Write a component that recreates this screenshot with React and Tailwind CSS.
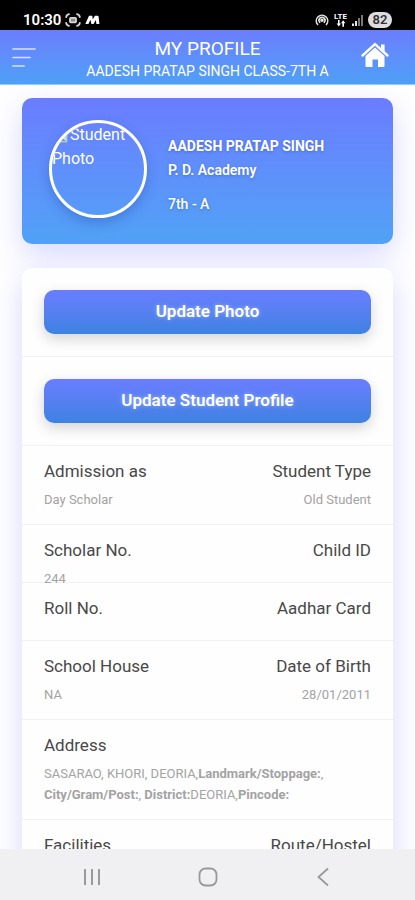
import React from 'react';

const rows = [
  { left: ['Admission as', 'Day Scholar'], right: ['Student Type', 'Old Student'] },
  { left: ['Scholar No.', '244'], right: ['Child ID', ''], compact: true },
  { left: ['Roll No.', ''], right: ['Aadhar Card', ''], compact: true },
  { left: ['School House', 'NA'], right: ['Date of Birth', '28/01/2011'] },
];

const StatusBar = () => (
  <div className="h-[30px] shrink-0 bg-black text-white flex items-center justify-between pt-[10px] px-[23px]">
    <div className="flex items-center gap-1">
      <span className="text-[15px] leading-5 font-semibold">10:30</span>
      <svg width="16" height="14" viewBox="0 0 16 14" fill="none" stroke="#d8d8d8" strokeWidth="1.8" strokeLinecap="round">
        <path d="M1.2 4.2Q1.5 1.6 4 1.2M12 1.2q2.5.4 2.8 3M14.8 9.8q-.3 2.6-2.8 3M4 12.8Q1.5 12.4 1.2 9.8" />
        <rect x="5" y="4.8" width="6" height="4.6" rx="1" fill="#8a8a8a" />
      </svg>
      <svg width="15" height="10" viewBox="0 0 15 10" fill="white">
        <path d="M4 .8h3.2l.6 3.4L10 .8h2.6q.9 0 1 1L14.4 9h-3l-.6-4L8.600 9H6.400L5.500 4.800 3.400 9H.3z" />
      </svg>
    </div>
    <div className="flex items-center gap-[5px]">
      <svg width="14" height="12" viewBox="0 0 14 12" fill="none" stroke="#e5e5e5" strokeWidth="1.6" strokeLinecap="round">
        <path d="M2.600 10.500A5.700 5.700 0 1 1 11.400 10.500" />
        <path d="M4.700 8.300A3 3 0 1 1 9.300 8.300" />
        <circle cx="7" cy="6.300" r="1" fill="#e5e5e5" />
      </svg>
      <div className="flex flex-col items-center">
        <span className="text-[8px] leading-[7px] font-bold">LTE</span>
        <svg width="10" height="7" viewBox="0 0 10 7" fill="white">
          <path d="M2 0h1.600v3.500H5L2.800 6.600.6 3.500H2zM6.400 6.800H8V3.200h1.400L7.200.2 5 3.200h1.400z" />
        </svg>
      </div>
      <svg width="11" height="11" viewBox="0 0 11 11">
        <path d="M0 8.500h2V11H0zM3 6h2v5H3z" fill="#e5e5e5" />
        <path d="M6 3h2v8H6zM9 0h2v11H9z" fill="#777" />
      </svg>
      <span className="w-6 h-4 rounded-full bg-[#dedede] text-[#333] text-[13px] leading-4 font-semibold text-center">82</span>
    </div>
  </div>
);

const Header = () => (
  <header className="h-[55px] shrink-0 flex items-start justify-between pl-3 pr-6 text-white bg-gradient-to-b from-[#6b7dfd] to-[#4da0f7] border-b border-[#8fcbfa]">
    <button aria-label="Menu" className="mt-4 w-10">
      <svg width="26" height="22" viewBox="0 0 26 22" stroke="#d8e2ff" strokeWidth="1.700" strokeLinecap="round">
        <path d="M1 3h22M1 11.500h17M1 20h11" />
      </svg>
    </button>
    <div className="text-center pt-2 pl-1">
      <h1 className="text-[19px] leading-[22px]">MY PROFILE</h1>
      <p className="text-sm leading-[22px]">AADESH PRATAP SINGH CLASS-7TH A</p>
    </div>
    <button aria-label="Home" className="mt-3 w-8 flex justify-center">
      <svg width="28" height="26" viewBox="0 0 28 26">
        <path d="M1.500 13.500L14 2.200l12.500 11.300" fill="none" stroke="white" strokeWidth="2.400" strokeLinecap="round" />
        <path d="M20 2.500h3.600v7L20 6.300z" fill="white" />
        <path d="M4.500 14L14 5.600l9.500 8.400v10q0 1-1 1H17v-7.500h-5.500V25h-6q-1 0-1-1z" fill="white" />
      </svg>
    </button>
  </header>
);

const ProfileCard = () => (
  <section className="h-[146px] rounded-[10px] flex items-center gap-[21px] pl-[27px] text-white bg-gradient-to-b from-[#6a7cff] to-[#4fa2f6] shadow-[0_10px_30px_rgba(90,100,250,0.25)]">
    <div className="w-[98px] h-[98px] mb-1 shrink-0 rounded-full border-[3px] border-white overflow-hidden text-base leading-6 shadow-[0_5px_12px_rgba(30,60,160,0.3)]">
      <svg className="inline-block align-middle" width="18" height="16" viewBox="0 0 18 16">
        <path d="M1 1h10l4 4v9H1z" fill="#c9dcf7" stroke="#9fb2d8" />
        <path d="M2 13l5-5 7 5z" fill="#5fa658" />
      </svg>
      Student Photo
    </div>
    <div className="pt-2 text-sm leading-6 font-bold [text-shadow:0_1px_3px_rgba(30,50,140,0.35)]">
      <p>AADESH PRATAP SINGH</p>
      <p className="font-semibold">P. D. Academy</p>
      <p className="mt-[10px] font-medium">7th - A</p>
    </div>
  </section>
);

const ActionRow = ({ label }) => (
  <div className="px-[22px] py-[22px] border-b border-[#f1f1f3]">
    <button className="block w-full h-11 rounded-[10px] text-[17px] font-semibold text-white bg-gradient-to-b from-[#697dff] to-[#3d82e2] shadow-[0_5px_14px_rgba(0,0,0,0.17)] [text-shadow:0_0_4px_rgba(255,255,255,0.4)]">
      {label}
    </button>
  </div>
);

const Field = ({ label, value, right }) => (
  <div className={right ? 'text-right' : ''}>
    <dt className="text-[17px] leading-6 text-[#484848]">{label}</dt>
    {value && <dd className="mt-[6px] text-[13px] leading-[21px] text-[#a3a3a3]">{value}</dd>}
  </div>
);

const App = () => {
  return (
    <div className="h-screen flex flex-col overflow-hidden bg-white font-['Roboto',sans-serif]">
      <StatusBar />
      <Header />
      <main className="flex-1 min-h-0 overflow-hidden px-[22px] pt-[13px]">
        <ProfileCard />
        <section className="mt-6 rounded-[10px] bg-[#fefefe] shadow-[0_10px_30px_rgba(90,100,250,0.25)]">
          <ActionRow label="Update Photo" />
          <ActionRow label="Update Student Profile" />
          <dl>
            {rows.map((row) => (
              <div
                key={row.left[0]}
                className={`flex justify-between px-[22px] pt-[13px] border-b border-[#f1f1f3] ${row.compact ? 'h-[58px]' : 'pb-[14px]'}`}
              >
                <Field label={row.left[0]} value={row.left[1]} />
                <Field label={row.right[0]} value={row.right[1]} right />
              </div>
            ))}
            <div className="px-[22px] pt-[13px] pb-[14px] border-b border-[#f1f1f3]">
              <Field
                label="Address"
                value={
                  <>
                    SASARAO, KHORI, DEORIA,<b>Landmark/Stoppage:</b>,
                    <br />
                    <b>City/Gram/Post:</b>, <b>District:</b>DEORIA,<b>Pincode:</b>
                  </>
                }
              />
            </div>
            <div className="flex justify-between px-[22px] pt-[13px] pb-[14px]">
              <Field label="Facilities" />
              <Field label="Route/Hostel" right />
            </div>
          </dl>
        </section>
      </main>

      {/* Android navigation */}
      <nav className="h-[51px] shrink-0 bg-[#f0f0f2] flex items-center justify-between px-[82px] pt-1 text-[#999]">
        <button aria-label="Recent apps">
          <svg width="20" height="18" viewBox="0 0 20 18" stroke="currentColor" strokeWidth="2">
            <path d="M3 1v16M10 1v16M17 1v16" />
          </svg>
        </button>
        <button aria-label="Home screen">
          <svg width="20" height="20" viewBox="0 0 20 20" fill="none" stroke="currentColor" strokeWidth="1.800">
            <rect x="1.500" y="1.500" width="17" height="17" rx="6" />
          </svg>
        </button>
        <button aria-label="Back">
          <svg width="20" height="20" viewBox="0 0 20 20" fill="none" stroke="currentColor" strokeWidth="1.800">
            <path d="M15 1.500L5.500 10l9.500 8.500" />
          </svg>
        </button>
      </nav>
    </div>
  );
};

export default App;
